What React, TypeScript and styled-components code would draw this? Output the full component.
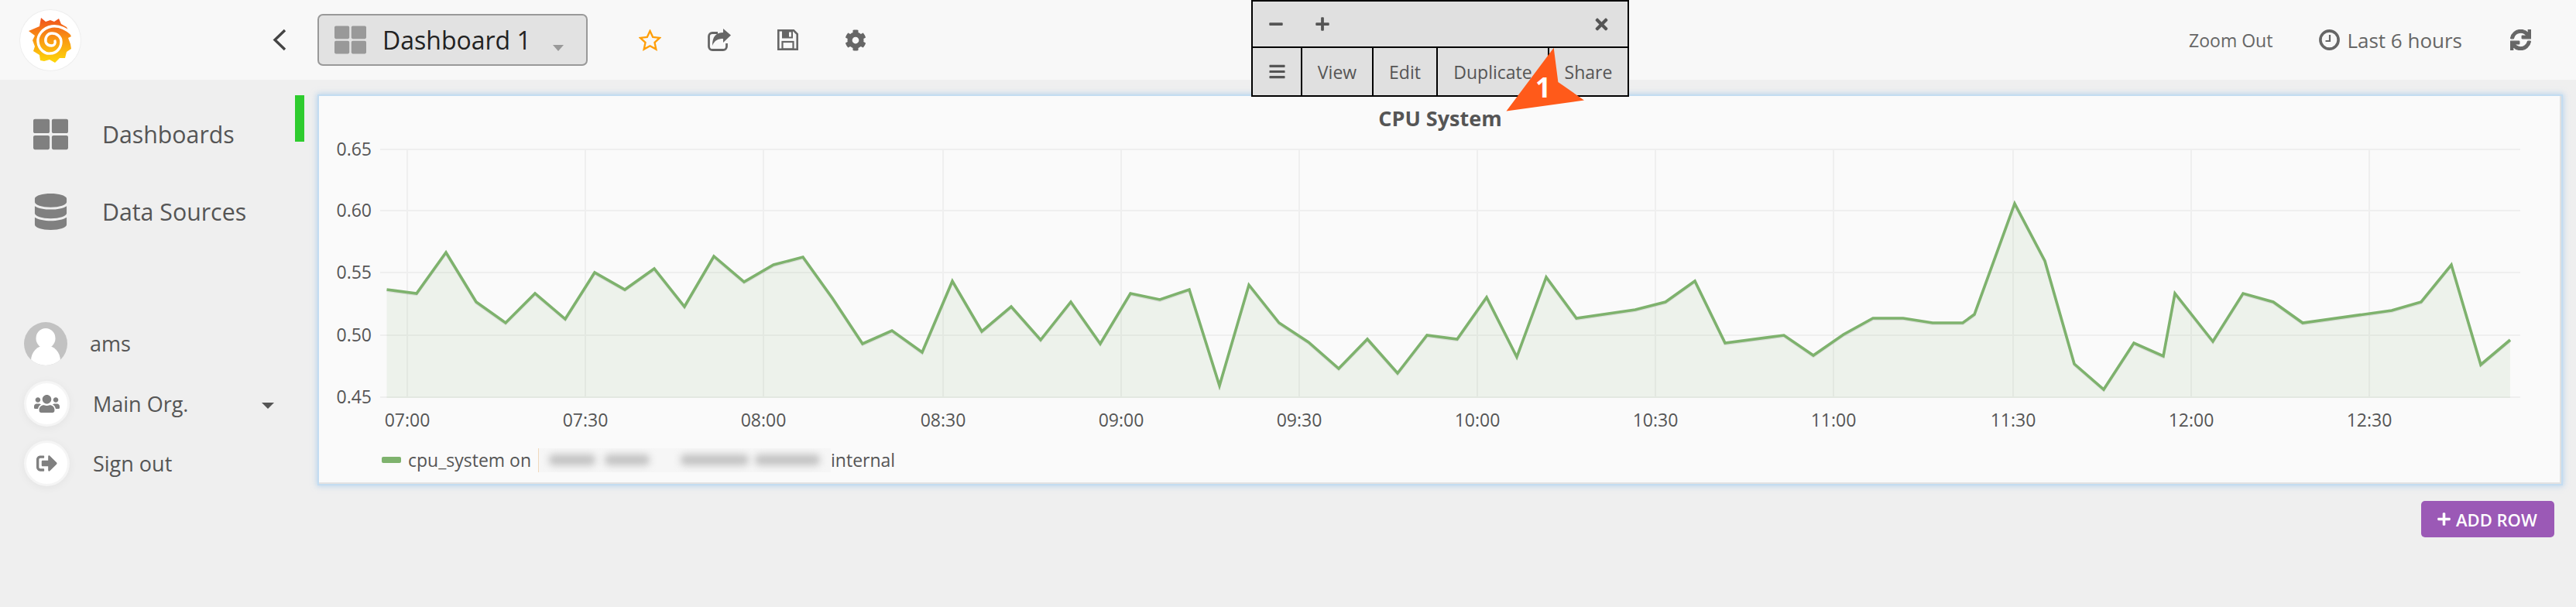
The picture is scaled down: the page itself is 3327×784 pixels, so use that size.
import styled, { createGlobalStyle } from "styled-components";
import {
  FaBars,
  FaCog,
  FaDatabase,
  FaMinus,
  FaPlus,
  FaSignOutAlt,
  FaSync,
  FaThLarge,
  FaTimes,
  FaUsers,
} from "react-icons/fa";

const GlobalStyle = createGlobalStyle`
  html, body {
    margin: 0;
    height: 100%;
    background: #efefef;
    overflow: hidden;
  }
  body {
    font-family: "Open Sans", "Noto Sans", "Liberation Sans", sans-serif;
    color: #555;
  }
  * { box-sizing: border-box; }
`;

// series read off the reference, in page pixels
const POINTS: [number, number][] = [
  [499.5, 374], [538, 379], [576, 326], [615, 390], [653, 417], [691, 379],
  [730, 412], [768, 352], [807, 374], [845, 347], [884, 396], [922, 331],
  [961, 364], [999, 342], [1037, 332], [1075, 385], [1114, 444], [1152, 427],
  [1191, 455], [1230, 363], [1268, 428], [1306, 396], [1344, 439], [1383, 390],
  [1421, 444], [1460, 379], [1498, 387], [1536, 374], [1575, 498], [1613, 368],
  [1652, 417], [1690, 442], [1729, 476], [1766, 438], [1805, 482], [1843, 433],
  [1882, 438], [1920, 384], [1959, 461], [1997, 358], [2036, 411], [2112, 400],
  [2151, 390], [2189, 363], [2228, 443], [2304, 433], [2342, 459], [2381, 432],
  [2419, 411], [2458, 411], [2496, 417], [2535, 417], [2550, 406], [2602, 263],
  [2641, 337], [2679, 470], [2717, 503], [2756, 443], [2794, 460], [2809, 379],
  [2858, 441], [2897, 379], [2936, 390], [2974, 417], [3089, 401], [3127, 390],
  [3166, 342], [3204, 471], [3242, 439],
];

const Y_TICKS = [
  { label: "0.65", y: 193 },
  { label: "0.60", y: 272 },
  { label: "0.55", y: 352 },
  { label: "0.50", y: 433 },
  { label: "0.45", y: 513 },
];

const X_TICKS = [
  { label: "07:00", x: 526 },
  { label: "07:30", x: 756 },
  { label: "08:00", x: 986 },
  { label: "08:30", x: 1218 },
  { label: "09:00", x: 1448 },
  { label: "09:30", x: 1678 },
  { label: "10:00", x: 1908 },
  { label: "10:30", x: 2138 },
  { label: "11:00", x: 2368 },
  { label: "11:30", x: 2600 },
  { label: "12:00", x: 2830 },
  { label: "12:30", x: 3060 },
];

const BLOBS = [
  { width: 60, gap: 12 },
  { width: 58, gap: 40 },
  { width: 88, gap: 8 },
  { width: 84, gap: 0 },
];

const Page = styled.div`
  position: relative;
  width: 3327px;
  height: 784px;
`;

const Header = styled.header`
  display: flex;
  align-items: center;
  height: 103px;
  padding: 0 58px 0 26px;
  background: #f8f8f8;
`;

const LogoDisc = styled.div`
  display: flex;
  width: 78px;
  height: 78px;
  border-radius: 50%;
  background: #fff;
  box-shadow: 0 0 0 1px #eee;
  margin-right: 248px;
`;

const BackChevron = styled.svg`
  width: 18px;
  height: 29px;
  margin-right: 40px;
`;

const DashButton = styled.div`
  display: flex;
  align-items: center;
  width: 349px;
  height: 67px;
  padding: 0 20px 0 20px;
  border: 2px solid #999;
  border-radius: 7px;
  background: #e2e2e2;
  color: #999;
  margin-right: 66px;
`;

const DashTitle = styled.span`
  margin-left: 21px;
  font-size: 32px;
  color: #222;
  line-height: 1;
`;

const Caret = styled.span<{ $color: string; $w: number; $h: number }>`
  display: inline-block;
  width: 0;
  height: 0;
  border-left: ${(p) => p.$w / 2}px solid transparent;
  border-right: ${(p) => p.$w / 2}px solid transparent;
  border-top: ${(p) => p.$h}px solid ${(p) => p.$color};
`;

const DashCaret = styled(Caret)`
  margin: 20px 0 0 28px;
`;

const ToolIcons = styled.div`
  display: flex;
  align-items: center;
  gap: 60px;
  color: #666;
`;

const Glyph = styled.svg`
  display: block;
  flex: none;
`;

const RightGroup = styled.div`
  display: flex;
  align-items: center;
  margin-left: auto;
  color: #666;
`;

const ZoomOut = styled.span`
  font-size: 23px;
  margin-right: 60px;
`;

const TimeRange = styled.span`
  display: flex;
  align-items: center;
  gap: 9px;
  font-size: 26px;
  margin-right: 62px;
`;

const Floating = styled.div`
  position: absolute;
  left: 1616px;
  top: 0;
  z-index: 3;
  width: 488px;
  height: 125px;
  border: 2px solid #000;
  background: #e0e0e0;
  color: #555;
`;

const FloatingTop = styled.div`
  display: flex;
  align-items: center;
  height: 60px;
  padding: 0 22px 0 20px;
  border-bottom: 2px solid #000;
  font-size: 20px;
`;

const FloatingTools = styled.div`
  display: flex;
  align-items: center;
  gap: 40px;
  margin-right: auto;
`;

const FloatingRow = styled.div`
  display: grid;
  grid-template-columns: 62px 92px 83px 144px 1fr;
  height: 61px;
`;

const MenuCell = styled.div`
  display: flex;
  align-items: center;
  justify-content: center;
  font-size: 23px;
  & + & {
    border-left: 2px solid #000;
  }
`;

const CalloutArrow = styled.svg`
  position: absolute;
  left: 1940px;
  top: 55px;
  z-index: 4;
  width: 112px;
  height: 95px;
`;

const CalloutNumber = styled.span`
  position: absolute;
  left: 1983px;
  top: 89px;
  z-index: 5;
  font-size: 35px;
  font-weight: 700;
  line-height: 48px;
  color: #fff;
`;

const Body = styled.div`
  display: flex;
  align-items: flex-start;
`;

const Sidebar = styled.nav`
  position: relative;
  flex: none;
  width: 412px;
  padding-top: 20px;
`;

const ActiveMark = styled.span`
  position: absolute;
  left: 381px;
  top: 20px;
  width: 12px;
  height: 60px;
  background: #2ecc2e;
`;

const NavItem = styled.div`
  display: flex;
  align-items: center;
  height: 100px;
  padding-left: 43px;
  font-size: 30.3px;
  color: #555;
`;

const NavIcon = styled.span`
  display: flex;
  justify-content: center;
  width: 45px;
  margin-right: 44px;
  color: #808080;
`;

const UserList = styled.div`
  margin-top: 82px;
  padding-left: 31px;
`;

const UserRow = styled.div`
  display: flex;
  align-items: center;
  height: 77.5px;
  font-size: 27px;
  color: #555;
`;

const Disc = styled.span`
  display: flex;
  align-items: center;
  justify-content: center;
  width: 59px;
  height: 59px;
  margin-right: 30px;
  border: 3px solid #f5f5f5;
  border-radius: 50%;
  background: #fff;
  color: #808080;
  box-shadow: 0 2px 12px rgba(0, 0, 0, 0.05);
`;

const Avatar = styled.svg`
  width: 56px;
  height: 56px;
  margin-right: 29px;
`;

const OrgCaret = styled(Caret)`
  margin-left: 95px;
  margin-top: 6px;
`;

const Content = styled.main`
  display: flex;
  flex-direction: column;
  flex: none;
  width: 2896px;
  padding-top: 21px;
`;

const Panel = styled.section`
  height: 501px;
  background: #fafafa;
  box-shadow:
    0 0 0 2px #c3dcf1,
    0 0 7px 3px rgba(150, 195, 235, 0.6),
    inset 0 -2px 0 #e2e2e2,
    inset -2px 0 0 #e2e2e2;
`;

const PanelTitle = styled.h2`
  margin: 0;
  height: 70px;
  padding-top: 11px;
  font-size: 27px;
  line-height: 36px;
  font-weight: 700;
  text-align: center;
  color: #555;
`;

const ChartSvg = styled.svg`
  display: block;
  width: 2896px;
  height: 376px;
  overflow: visible;
  font-family: "Open Sans", "Noto Sans", sans-serif;
  font-size: 23px;
`;

const Legend = styled.div`
  display: flex;
  align-items: center;
  height: 48px;
  padding-left: 81px;
  font-size: 23px;
  color: #555;
`;

const LegendSwatch = styled.span`
  width: 25px;
  height: 8px;
  margin-right: 9px;
  border-radius: 2px;
  background: #7eb26d;
`;

const BlurBox = styled.span`
  display: flex;
  align-items: center;
  flex: none;
  width: 378px;
  height: 31px;
  margin-left: 9px;
  padding-left: 13px;
  overflow: hidden;
  background: #f6f6f6;
  border-left: 1px solid #f0d9bd;
`;

const Blob = styled.span<{ $width: number; $gap: number }>`
  flex: none;
  width: ${(p) => p.$width}px;
  height: 14px;
  margin-right: ${(p) => p.$gap}px;
  border-radius: 6px;
  background: #c2c2c2;
  filter: blur(5px);
`;

const AddRow = styled.button`
  display: flex;
  align-items: center;
  gap: 6px;
  align-self: flex-end;
  width: 172px;
  height: 47px;
  margin: 22px 9px 0 0;
  padding: 0 0 0 20px;
  border: 0;
  border-radius: 5px;
  background: #9b59b6;
  color: #fff;
  font-family: inherit;
  font-size: 22px;
  font-weight: 600;
`;

const Logo = () => (
  <svg viewBox="0 0 78 78" width="78" height="78">
    <defs>
      <linearGradient id="grafana-flame" x1="0" y1="0" x2="0" y2="1">
        <stop offset="0" stopColor="#f0501e" />
        <stop offset="0.5" stopColor="#fa9a12" />
        <stop offset="1" stopColor="#fdd80a" />
      </linearGradient>
    </defs>
    <path
      fill="url(#grafana-flame)"
      d="M27 10 L33 15 L39 13 L44 15 L50 11 L53 18 L60 22 L66 34 L62 36 L65 44 L66 50 L60 54 L58 62 L51 62 L45 68 L38 64 L31 66 L26 65 L25 58 L17 53 L19 47 L16 39 L19 33 L11 27 L18 24 L25 21 Z"
    />
    <path
      fill="none"
      stroke="#fff"
      strokeWidth="3.4"
      strokeLinecap="round"
      d="M67 31 C58 23 49 20 41 21 C29 23 22 33 23 41 C24 51 32 57 39 56 C47 56 53 49 53 41 C53 34 47 30 41 30 C35 30 32 36 33 41 C34 45 38 46 41 46 C44 46 46 43 45 40"
    />
  </svg>
);

const StarIcon = () => (
  <Glyph viewBox="0 0 29 28" width="29" height="28">
    <polygon
      points="14.5,2 18.2,9.9 27,10.9 20.5,16.9 22.3,25.6 14.5,21.3 6.7,25.6 8.5,16.9 2,10.9 10.8,9.9"
      fill="none"
      stroke="#ff9f0a"
      strokeWidth="2.4"
    />
  </Glyph>
);

const ShareIcon = () => (
  <Glyph viewBox="0 0 30 29" width="30" height="29">
    <path
      d="M13 5.5 H6 a4.5 4.5 0 0 0 -4.5 4.5 V23 a4.5 4.5 0 0 0 4.5 4.5 H20 a4.5 4.5 0 0 0 4.5 -4.5 V19"
      fill="none"
      stroke="currentColor"
      strokeWidth="2.8"
    />
    <path d="M30 8.5 L20 0 V5 C11 5 6 10 6 22 C9 15 13 13 20 13 V18 Z" fill="currentColor" />
  </Glyph>
);

const SaveIcon = () => (
  <Glyph viewBox="0 0 27 27" width="27" height="27">
    <path d="M1.3 1.3 H21 L25.7 6 V25.7 H1.3 Z" fill="none" stroke="currentColor" strokeWidth="2.6" />
    <rect x="6" y="1.5" width="14" height="10" fill="currentColor" />
    <rect x="15" y="3.5" width="3" height="6" fill="#f8f8f8" />
    <rect x="6.5" y="16" width="14" height="9.5" fill="none" stroke="currentColor" strokeWidth="2.2" />
  </Glyph>
);

const ClockIcon = () => (
  <Glyph viewBox="0 0 27 27" width="27" height="27">
    <circle cx="13.5" cy="13.5" r="11.6" fill="none" stroke="currentColor" strokeWidth="3.6" />
    <polyline points="14,7 14,15 8.5,15" fill="none" stroke="currentColor" strokeWidth="2.2" />
  </Glyph>
);

const AvatarIcon = () => (
  <Avatar viewBox="0 0 56 56">
    <defs>
      <clipPath id="avatar-clip">
        <circle cx="28" cy="28" r="28" />
      </clipPath>
    </defs>
    <g clipPath="url(#avatar-clip)">
      <rect width="56" height="56" fill="#c2c2c2" />
      <ellipse cx="28" cy="21" rx="12.5" ry="13" fill="#fff" />
      <ellipse cx="28" cy="50" rx="19" ry="20" fill="#fff" />
    </g>
  </Avatar>
);

const Chart = () => {
  const line = POINTS.map(([x, y]) => `${x},${y}`).join(" ");
  const area = `499.5,514 ${line} 3242,514`;
  return (
    <ChartSvg viewBox="412 194 2896 376">
      {Y_TICKS.map((t) => (
        <g key={t.label}>
          <line x1={491} x2={3255} y1={t.y} y2={t.y} stroke="#efefef" strokeWidth={2} />
          <text x={480} y={t.y + 8} textAnchor="end" fill="#555">
            {t.label}
          </text>
        </g>
      ))}
      {X_TICKS.map((t) => (
        <g key={t.label}>
          <line x1={t.x} x2={t.x} y1={193} y2={513} stroke="#efefef" strokeWidth={2} />
          <text x={t.x} y={551} textAnchor="middle" fill="#555">
            {t.label}
          </text>
        </g>
      ))}
      <polygon points={area} fill="#7eb26d" fillOpacity={0.1} />
      <polyline
        points={line}
        fill="none"
        stroke="rgba(0,0,0,0.08)"
        strokeWidth={3}
        transform="translate(0 1.6)"
      />
      <polyline points={line} fill="none" stroke="#7eb26d" strokeWidth={3.6} strokeLinejoin="miter" />
    </ChartSvg>
  );
};

const App = () => {
  return (
    <Page>
      <GlobalStyle />
      <Header>
        <LogoDisc>
          <Logo />
        </LogoDisc>
        <BackChevron viewBox="0 0 18 29">
          <polyline points="16,2 3,14.5 16,27" fill="none" stroke="#444" strokeWidth="3.4" />
        </BackChevron>
        <DashButton>
          <FaThLarge size={41} />
          <DashTitle>Dashboard 1</DashTitle>
          <DashCaret $color="#999" $w={15} $h={8} />
        </DashButton>
        <ToolIcons>
          <StarIcon />
          <ShareIcon />
          <SaveIcon />
          <FaCog size={28} />
        </ToolIcons>
        <RightGroup>
          <ZoomOut>Zoom Out</ZoomOut>
          <TimeRange>
            <ClockIcon />
            Last 6 hours
          </TimeRange>
          <FaSync size={27} stroke="currentColor" strokeWidth={24} />
        </RightGroup>
      </Header>

      <Floating>
        <FloatingTop>
          <FloatingTools>
            <FaMinus />
            <FaPlus />
          </FloatingTools>
          <FaTimes size={23} />
        </FloatingTop>
        <FloatingRow>
          <MenuCell>
            <FaBars />
          </MenuCell>
          <MenuCell>View</MenuCell>
          <MenuCell>Edit</MenuCell>
          <MenuCell>Duplicate</MenuCell>
          <MenuCell>Share</MenuCell>
        </FloatingRow>
      </Floating>
      <CalloutArrow viewBox="1940 55 112 95">
        <polygon points="1945.5,143.5 2006.7,61.7 2012.4,106 2046,129.5" fill="#ff5a1a" />
      </CalloutArrow>
      <CalloutNumber>1</CalloutNumber>

      <Body>
        <Sidebar>
          <ActiveMark />
          <NavItem>
            <NavIcon>
              <FaThLarge size={45} />
            </NavIcon>
            Dashboards
          </NavItem>
          <NavItem>
            <NavIcon>
              <FaDatabase size={47} />
            </NavIcon>
            Data Sources
          </NavItem>
          <UserList>
            <UserRow>
              <AvatarIcon />
              ams
            </UserRow>
            <UserRow>
              <Disc>
                <FaUsers size={33} />
              </Disc>
              Main Org.
              <OrgCaret $color="#555" $w={16} $h={8} />
            </UserRow>
            <UserRow>
              <Disc>
                <FaSignOutAlt size={27} />
              </Disc>
              Sign out
            </UserRow>
          </UserList>
        </Sidebar>
        <Content>
          <Panel>
            <PanelTitle>CPU System</PanelTitle>
            <Chart />
            <Legend>
              <LegendSwatch />
              cpu_system on
              <BlurBox>
                {BLOBS.map((b) => (
                  <Blob key={b.width + b.gap} $width={b.width} $gap={b.gap} />
                ))}
              </BlurBox>
              internal
            </Legend>
          </Panel>
          <AddRow>
            <FaPlus size={19} />
            ADD ROW
          </AddRow>
        </Content>
      </Body>
    </Page>
  );
};

export default App;
